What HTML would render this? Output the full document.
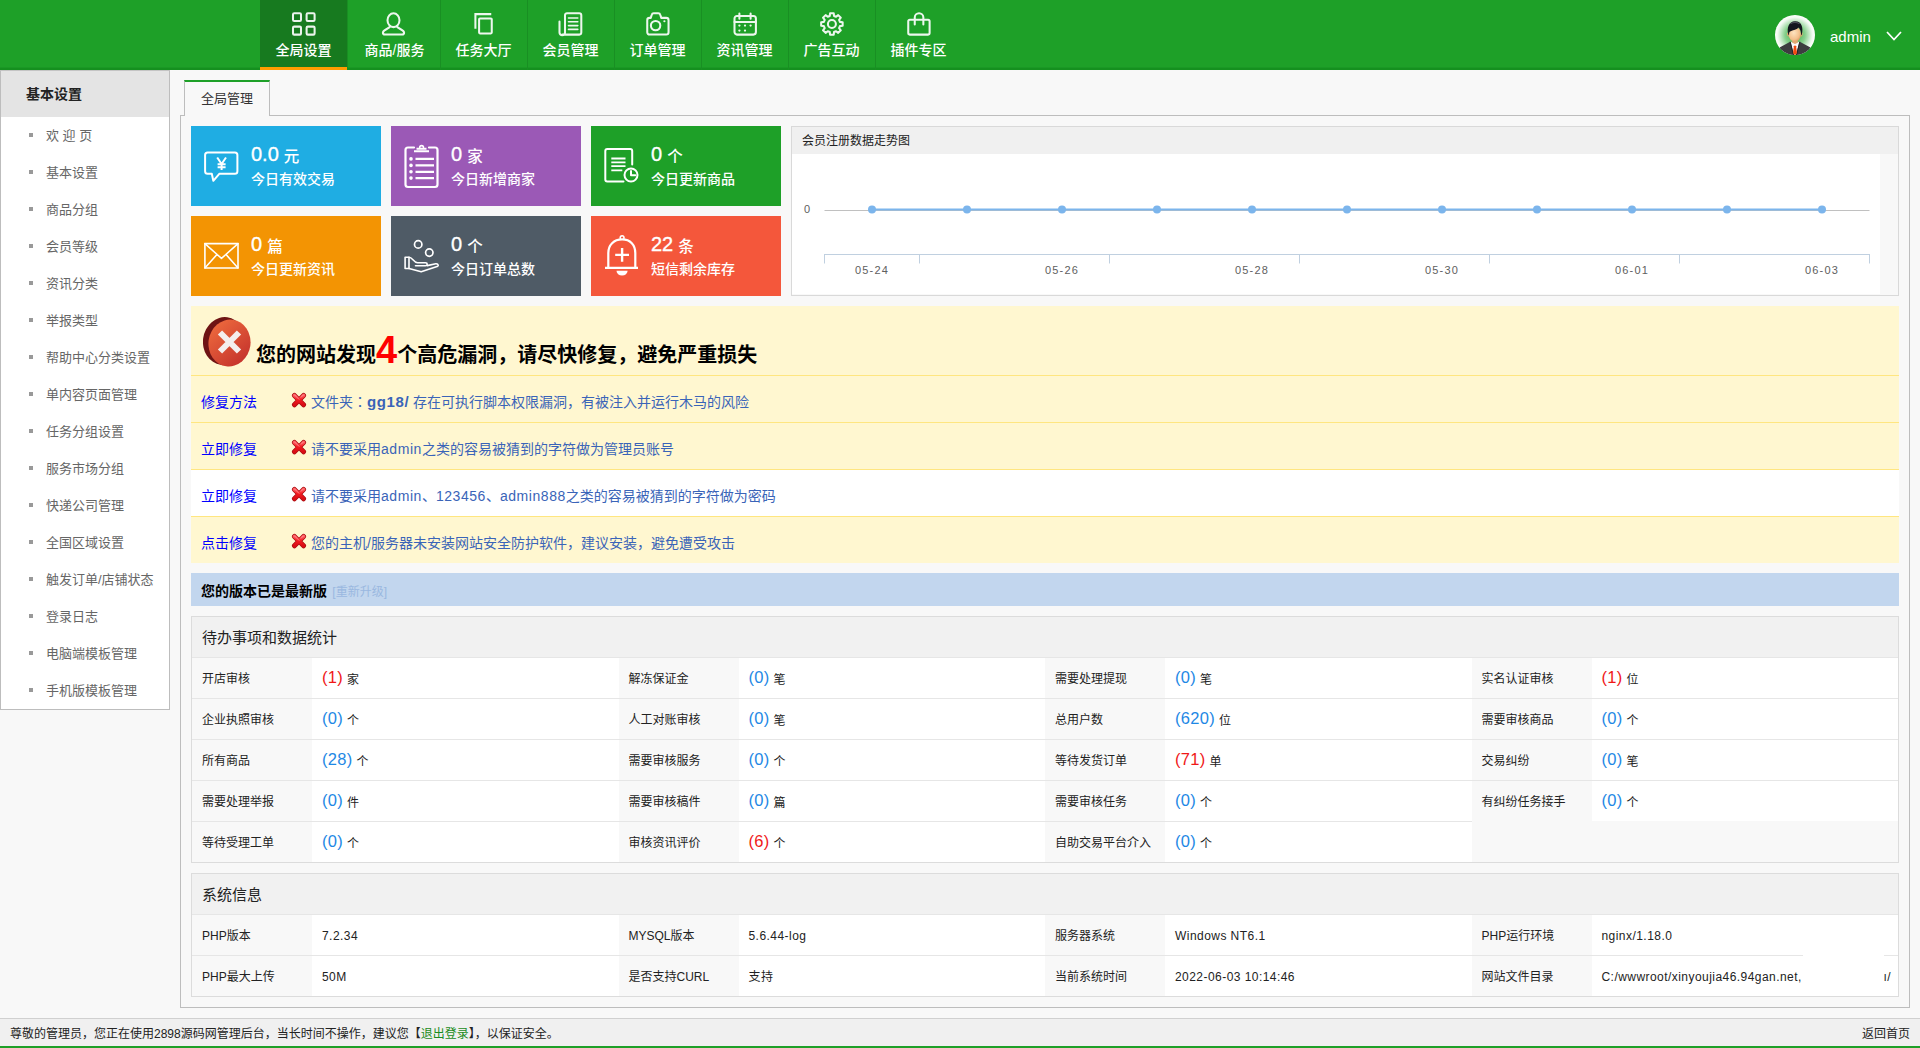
<!DOCTYPE html>
<html lang="zh-CN">
<head>
<meta charset="utf-8">
<title>管理后台</title>
<style>
*{box-sizing:border-box;margin:0;padding:0}
html,body{width:1920px;height:1048px;overflow:hidden}
body{background:#f8f8f8;font-family:"Liberation Sans","Noto Sans CJK SC",sans-serif;font-size:12px;color:#333;position:relative}
a{text-decoration:none;color:inherit}
ul{list-style:none}
.abs{position:absolute}
/* header */
#top{position:absolute;left:0;top:0;width:1920px;height:70px;background:#1ea028;border-bottom:2px solid #15901f;box-shadow:inset 0 -1px 0 #1a9825}
#nav{position:absolute;left:260px;top:0;height:70px;display:flex}
#nav li{width:87px;height:70px;border-right:1px solid #198f23;position:relative;text-align:center;color:#fff;font-size:14px}
#nav li:nth-child(n+3) svg{left:30px}
#nav li:nth-child(n+3) span{left:-1px}
#nav li:nth-child(1){width:88px}
#nav li:nth-child(2){width:93px}
#nav li:nth-child(2) svg{left:33px}
#nav li:nth-child(2) span{width:93px}
#nav li:last-child{border-right:0}
#nav li.on{background:#177a1f}
#nav li.on:after{content:"";position:absolute;left:0;bottom:0;width:87px;height:3px;background:#ff9c00}
#nav li svg{position:absolute;left:31px;top:11px;width:26px;height:26px;fill:none;stroke:#fff;stroke-width:2.05;stroke-linecap:round;stroke-linejoin:round;opacity:.92}
#nav li span{font-weight:500;position:absolute;left:0;width:87px;top:40px;line-height:20px;white-space:nowrap}
#user{position:absolute;left:1775px;top:15px;width:140px;height:40px;color:#fff}
#user .av{position:absolute;left:0;top:0;width:40px;height:40px}
#user .nm{position:absolute;left:55px;top:12px;font-size:15px;line-height:20px}
#user .ar{position:absolute;left:111px;top:16px;width:16px;height:10px}
/* sidebar */
#side{position:absolute;left:0;top:70px;width:170px;height:640px;background:#fff;border:1px solid #bdbdbd;border-top:1px solid #c4c4c4}
#side h3{height:46px;background:#e4e4e4;font-size:14px;font-weight:bold;color:#222;line-height:47px;padding-left:25px}
#side li{height:37px;line-height:37px;font-size:13px;color:#666;padding-left:45px;position:relative;white-space:nowrap}
#side li:before{content:"";position:absolute;left:28px;top:16px;width:4px;height:4px;background:#999}
/* main panel */
#tab{position:absolute;left:184px;top:80px;width:86px;height:36px;border:1px solid #bdbdbd;border-top:2px solid #1ea028;border-bottom:0;background:#f8f8f8;text-align:center;font-size:13px;line-height:34px;color:#333;z-index:2}
#panel{position:absolute;left:180px;top:115px;width:1730px;height:893px;border:1px solid #bdbdbd}
/* cards */
.card{position:absolute;width:190px;height:80px;color:#fff}
.card svg{position:absolute;left:0;top:0;width:60px;height:80px;fill:none;stroke:#fff;stroke-width:1.5;stroke-linecap:round;stroke-linejoin:round}
.card .n{-webkit-text-stroke:.35px #fff;position:absolute;left:60px;top:15px;font-size:20px;line-height:26px;white-space:nowrap}
.card .n i{-webkit-text-stroke:0;font-weight:500;position:relative;top:1px;font-style:normal;font-size:15.5px;margin-left:5px}
.card .t{font-weight:500;position:absolute;left:60px;top:43px;font-size:14px;line-height:20px;white-space:nowrap}
/* chart */
#chart{position:absolute;left:791px;top:126px;width:1108px;height:170px;border:1px solid #d9d9d9;background:#f8f8f8}
#chart h4{height:27px;background:#f0f0f0;font-weight:normal;font-size:12px;line-height:29px;padding-left:10px;color:#222}
#chart .plot{position:absolute;left:0;top:27px;width:1088px;height:140px;background:#fff}
/* warn */
#warn{position:absolute;left:191px;top:306px;width:1708px;height:257px;background:#fff7d0}
#warn .hd{height:70px;border-bottom:1px solid #ffe680;position:relative}
#warn .hd .tt{position:absolute;left:65px;top:27px;font-size:20px;font-weight:bold;color:#000;line-height:44px;white-space:nowrap}
#warn .hd .tt b{color:#f00;font-size:38px;position:relative;top:.5px;line-height:30px;font-family:"Liberation Sans",sans-serif}
#warn .row{height:47px;border-bottom:1px solid #ffe680;position:relative;font-size:14px;line-height:52px;color:#3a64b8}
#warn .row.w{background:#fff}
#warn .row:last-child{border-bottom:0;height:46px}
#warn .row a{position:absolute;left:10px;top:0;color:#0000ff}
#warn .row .x{position:absolute;left:99.500px;top:15.500px;width:16px;height:16px}
.cj{font-family:"Liberation Sans","Noto Sans CJK JP",sans-serif}
#warn .row .m b{font-size:15px;letter-spacing:.6px}
.la{letter-spacing:.55px}
#warn .row .m{position:absolute;left:120px;top:0;white-space:nowrap}
/* version */
#ver{position:absolute;left:191px;top:573px;width:1708px;height:33px;background:#c2d6ee;font-size:12px;line-height:36px;padding-left:10px;color:#000}
#ver b{font-size:14px}
#ver span{color:#9ab8e0;margin-left:2px}
/* tables */
.tb{position:absolute;left:191px;width:1708px;border:1px solid #dcdcdc;background:#f8f8f8}
.tb h4{height:41px;background:#f1f1f1;font-weight:normal;font-size:15px;line-height:42px;padding-left:10px;color:#222;border-bottom:1px solid #e6e6e6}
.tb .r{height:41px;display:flex;border-bottom:1px solid #e6e6e6}
.tb .r:last-child{border-bottom:0;height:40px}
.tb .l{width:120px;padding-left:10px;line-height:42px;height:40px;overflow:hidden;color:#222;white-space:nowrap}
.tb .v{width:306.5px;background:#fff;padding-left:10px;line-height:41px;height:40px;overflow:hidden;color:#222;white-space:nowrap;position:relative}
.tb .v b{font-weight:normal;font-size:16.5px;color:#1e88e5;margin-right:4px;position:relative;top:-1.5px;letter-spacing:.3px}
.tb .v b.rd{color:#f01818}
.tb .e{background:#f8f8f8;margin-top:-1px;height:41px;position:relative}
/* footer */
#foot{position:absolute;left:0;top:1018px;width:1920px;height:30px;background:#f0f0f0;border-top:1px solid #d0d0d0;border-bottom:2px solid #1ea028;font-size:12px;line-height:30px;color:#222;padding-left:10px}
#foot em{font-style:normal;color:#1a8c22}
#foot .bk{position:absolute;right:10px;top:0}
.tail{position:absolute;left:292px;top:0}
.sys .v{letter-spacing:.45px;line-height:43px}
</style>
</head>
<body>
<div id="top">
<ul id="nav">
<li class="on"><svg viewBox="0 0 26 26"><rect x="2" y="2.250" width="8" height="7.700" rx="1.200"/><rect x="15.600" y="2.250" width="8" height="7.700" rx="1.200"/><rect x="2" y="15.600" width="8" height="8" rx="1.200"/><rect x="15.600" y="15.600" width="8" height="8" rx="1.200"/></svg><span>全局设置</span></li>
<li><svg viewBox="0 0 26 26"><ellipse cx="12.500" cy="9.200" rx="6" ry="6.900"/><path d="M9.300 15.300C8 18 1.900 18.500 1.900 21.800c0 1.200.800 1.800 2 1.800h17.200c1.200 0 2-.600 2-1.800 0-3.300-6.100-3.800-7.400-6.500"/></svg><span>商品/服务</span></li>
<li><svg viewBox="0 0 26 26"><path d="M4.400 17.750V3.100h15.850" stroke-linecap="butt" stroke-linejoin="miter"/><rect x="8.100" y="7.500" width="12.650" height="14.900" rx=".8"/></svg><span>任务大厅</span></li>
<li><svg viewBox="0 0 26 26"><path d="M1.500 10.500V21.500a2.750 2.750 0 0 0 5.500 0V4.250a2 2 0 0 1 2-2h12.300a2 2 0 0 1 2 2V21.600a2 2 0 0 1-2 2H4.250"/><path d="M10.500 7h9.300M10.500 10.800h9.300M10.500 14.600h9.300M10.500 18.400h9.300" stroke-width="1.600"/></svg><span>会员管理</span></li>
<li><svg viewBox="0 0 26 26"><path d="M2.250 9.200a2.300 2.300 0 0 1 2.300-2.300h1.200l1-3.200a2 2 0 0 1 1.900-1.450h4.700a2 2 0 0 1 1.900 1.450l1 3.200h5a2.300 2.300 0 0 1 2.300 2.300v12.100a2.300 2.300 0 0 1-2.300 2.300H4.550a2.300 2.300 0 0 1-2.300-2.300z"/><circle cx="10.600" cy="14.600" r="4.700"/><circle cx="19.400" cy="10.250" r="1.100" fill="#fff" stroke="none"/></svg><span>订单管理</span></li>
<li><svg viewBox="0 0 26 26"><rect x="2.500" y="5" width="21.400" height="18.600" rx="2.500"/><path d="M2.500 10.900h21.400M7.400 2.500v5.250M18.600 2.500v5.250"/><g fill="#fff" stroke="none"><circle cx="7.400" cy="14.600" r="1.150"/><circle cx="13" cy="14.600" r="1.150"/><circle cx="18.600" cy="14.600" r="1.150"/><circle cx="7.400" cy="19.600" r="1.150"/><circle cx="13" cy="19.600" r="1.150"/></g></svg><span>资讯管理</span></li>
<li><svg viewBox="0 0 26 26"><path d="M10.77 4.98L11.06 2.26L14.74 2.26L15.03 4.98L17.06 5.82L19.19 4.10L21.80 6.71L20.08 8.84L20.92 10.87L23.64 11.16L23.64 14.84L20.92 15.13L20.08 17.16L21.80 19.29L19.19 21.90L17.06 20.18L15.03 21.02L14.74 23.74L11.06 23.74L10.77 21.02L8.74 20.18L6.61 21.90L4.00 19.29L5.72 17.16L4.88 15.13L2.16 14.84L2.16 11.16L4.88 10.87L5.72 8.84L4.00 6.71L6.61 4.10L8.74 5.82z"/><circle cx="12.900" cy="13" r="4"/></svg><span>广告互动</span></li>
<li><svg viewBox="0 0 26 26"><path d="M2.250 10.250a1.500 1.500 0 0 1 1.500-1.500h18.350a1.500 1.500 0 0 1 1.500 1.500V22.100a1.500 1.500 0 0 1-1.500 1.500H3.750a1.500 1.500 0 0 1-1.500-1.500z"/><path d="M8.750 13.400V6.600a4.300 4.300 0 0 1 8.600 0v6.800"/></svg><span>插件专区</span></li>
</ul>
<div id="user">
<svg class="av" viewBox="0 0 40 40"><defs><radialGradient id="ag" cx="50%" cy="50%" r="50%"><stop offset="0" stop-color="#3fae48"/><stop offset=".5" stop-color="#86d08c"/><stop offset=".88" stop-color="#f2faf2"/><stop offset="1" stop-color="#ffffff"/></radialGradient><radialGradient id="fg" cx="42%" cy="40%" r="65%"><stop offset="0" stop-color="#fde3c0"/><stop offset=".7" stop-color="#f3c08c"/><stop offset="1" stop-color="#d89a62"/></radialGradient><clipPath id="ac"><circle cx="20" cy="20" r="20"/></clipPath></defs><circle cx="20" cy="20" r="20" fill="url(#ag)"/><g clip-path="url(#ac)"><path d="M2 41L5 32.300 15.200 26.700 20 32 24.800 26.700 35 32.300 38 41z" fill="#3d3d40"/><path d="M15.400 26.800L19 40h2l3.600-13.200-4.600 1.500z" fill="#fbfbfd"/><path d="M15.200 26.700L18.500 40M24.800 26.700L21.500 40" stroke="#232325" stroke-width="1" fill="none"/><path d="M18.900 31.300L20 30.200l1.100 1.100.9 6.700-2 2.500-2-2.500z" fill="#f04a10"/><path d="M17.300 23.500h5.400v4.300L20 29l-2.700-1.200z" fill="#e3a873"/><ellipse cx="19.800" cy="19.200" rx="6.200" ry="7.400" fill="url(#fg)"/><path d="M12.600 17.800c-.3 1.600.2 3 1 3.500" stroke="#e0a56c" stroke-width="1.200" fill="none"/><path d="M27 17.800c.3 1.600-.2 3-1 3.500" stroke="#e0a56c" stroke-width="1.200" fill="none"/><path d="M13.300 19.500c-1.800-6.500.5-13 6.700-13.200 6.300-.2 8.700 6 6.800 13.200l-.8.700c.3-3-.4-5.500-2.300-7.700-2.200 2.500-6.500 2.600-9 4.200-.6.800-.7 2-.6 3.500z" fill="#14161f"/><path d="M15.500 8.800c2.500-2 6.500-2 9 0" stroke="#5a5c66" stroke-width="1.200" fill="none" opacity=".8"/></g></svg>
<span class="nm">admin</span>
<svg class="ar" viewBox="0 0 16 10"><path d="M1 1l7 7.500L15 1" fill="none" stroke="#fff" stroke-width="1.700"/></svg>
</div>
</div>

<div id="side">
<h3>基本设置</h3>
<ul>
<li>欢 迎 页</li><li>基本设置</li><li>商品分组</li><li>会员等级</li><li>资讯分类</li><li>举报类型</li><li>帮助中心分类设置</li><li>单内容页面管理</li><li>任务分组设置</li><li>服务市场分组</li><li>快递公司管理</li><li>全国区域设置</li><li>触发订单/店铺状态</li><li>登录日志</li><li>电脑端模板管理</li><li>手机版模板管理</li>
</ul>
</div>

<div id="tab">全局管理</div>
<div id="panel"></div>

<div class="card" style="left:191px;top:126px;background:#1fade3"><svg viewBox="0 0 60 80"><path d="M16.600 26.500h27.300a2.500 2.500 0 0 1 2.500 2.500v16.200a2.500 2.500 0 0 1-2.500 2.500H28.500L22.300 54.800 20.800 47.700H16.600a2.500 2.500 0 0 1-2.500-2.500V29a2.500 2.500 0 0 1 2.500-2.500z" stroke-width="2"/><path d="M26.200 31.500l4.400 6.500 4.400-6.500M30.600 38v6M26.600 38.300h8M26.600 41.300h8" stroke-width="2" stroke-linecap="butt"/></svg><div class="n">0.0<i>元</i></div><div class="t">今日有效交易</div></div>
<div class="card" style="left:391px;top:126px;background:#9b59b6"><svg viewBox="0 0 60 80"><path d="M23 21.500h-6a2.500 2.500 0 0 0-2.500 2.500v34.500a2.500 2.500 0 0 0 2.500 2.500h27a2.500 2.500 0 0 0 2.500-2.500V24a2.500 2.500 0 0 0-2.500-2.500h-6" stroke-width="2.200"/><path d="M23 25.300h15M25.500 22.800h10" stroke-width="2" stroke-linecap="butt"/><path d="M28.700 21.500a1.900 1.900 0 1 1 3.800 0" stroke-width="1.600"/><path d="M24.500 32.900h18.500M24.500 39.400h18.500M24.500 45.800h18.500M24.500 52.100h18.500" stroke-width="2.200" stroke-linecap="butt"/><g fill="#fff" stroke="none"><circle cx="20" cy="32.900" r="1.800"/><circle cx="20" cy="39.400" r="1.800"/><circle cx="20" cy="45.800" r="1.800"/><circle cx="20" cy="52.100" r="1.800"/></g></svg><div class="n">0<i>家</i></div><div class="t">今日新增商家</div></div>
<div class="card" style="left:591px;top:126px;background:#1ea028"><svg viewBox="0 0 60 80"><path d="M41.200 38.500V25a2 2 0 0 0-2-2H16.300a2 2 0 0 0-2 2v28.600a2 2 0 0 0 2 2H32.500" stroke-width="2"/><path d="M20.300 32.500h14.200M20.300 36.300h14.200M20.300 40.200h14.200M20.300 44.400h11" stroke-width="1.800" stroke-linecap="butt"/><circle cx="40" cy="49" r="6.500" stroke-width="2"/><path d="M40 45v4.200h4.300" stroke-width="2"/></svg><div class="n">0<i>个</i></div><div class="t">今日更新商品</div></div>
<div class="card" style="left:191px;top:216px;background:#f39403"><svg viewBox="0 0 60 80"><rect x="13.900" y="27.600" width="33.100" height="24.400" stroke-width="1.600"/><path d="M13.900 27.600L30.500 42.400 47 27.600M13.900 52L26 38.400M47 52L35 38.400" stroke-width="1.500"/></svg><div class="n">0<i>篇</i></div><div class="t">今日更新资讯</div></div>
<div class="card" style="left:391px;top:216px;background:#4f5b66"><svg viewBox="0 0 60 80"><circle cx="27.200" cy="28.400" r="3.700" stroke-width="1.700"/><circle cx="38.300" cy="36.600" r="3.700" stroke-width="1.700"/><path d="M14.100 41.200h3.900v11.300h-3.900z" stroke-width="1.600"/><path d="M18 41.200c3.500 0 4.500 5.500 8.500 5.500h8c2.300 0 2.300 3 0 3h-10" stroke-width="1.600"/><path d="M18 52.500l12.200 3.300 16.600-5.600c1-.8-.2-2.700-2-2.400l-8.500 1.800" stroke-width="1.600"/></svg><div class="n">0<i>个</i></div><div class="t">今日订单总数</div></div>
<div class="card" style="left:591px;top:216px;background:#f4573b"><svg viewBox="0 0 60 80"><path d="M14 51.900h33" stroke-width="2.400" stroke-linecap="butt"/><path d="M17.300 51.900V37c0-8 5.500-13.600 13.800-13.600S44.300 29 44.300 37v14.900" stroke-width="2.200"/><path d="M29.300 22.300a1.900 1.900 0 1 1 3.600 0" stroke-width="1.600"/><path d="M31.100 32v13.800M24.200 38.900h13.800" stroke-width="2.400" stroke-linecap="butt"/><path d="M25.500 54.800h11.100a5.550 4.800 0 0 1-11.100 0z" fill="#fff" stroke="none"/></svg><div class="n">22<i>条</i></div><div class="t">短信剩余库存</div></div>

<div id="chart"><h4>会员注册数据走势图</h4><svg class="plot" viewBox="0 0 1088 140" style="font-family:'Liberation Sans',sans-serif"><rect width="1088" height="140" fill="#fff"/><path d="M32.5 56.5H1077.5" stroke="#c0c0c0" stroke-width="1" fill="none"/><path d="M32.0 100.5H1078.0" stroke="#c0d0e0" stroke-width="1" fill="none"/><path d="M32.5 100.5v9M127.5 100.5v9M317.5 100.5v9M507.5 100.5v9M697.5 100.5v9M887.5 100.5v9M1077.5 100.5v9" stroke="#c0d0e0" stroke-width="1" fill="none"/><path d="M80 55.5H1030" stroke="#7cb5ec" stroke-width="2" fill="none"/><circle cx="80" cy="55.5" r="4" fill="#7cb5ec"/><circle cx="175" cy="55.5" r="4" fill="#7cb5ec"/><circle cx="270" cy="55.5" r="4" fill="#7cb5ec"/><circle cx="365" cy="55.5" r="4" fill="#7cb5ec"/><circle cx="460" cy="55.5" r="4" fill="#7cb5ec"/><circle cx="555" cy="55.5" r="4" fill="#7cb5ec"/><circle cx="650" cy="55.5" r="4" fill="#7cb5ec"/><circle cx="745" cy="55.5" r="4" fill="#7cb5ec"/><circle cx="840" cy="55.5" r="4" fill="#7cb5ec"/><circle cx="935" cy="55.5" r="4" fill="#7cb5ec"/><circle cx="1030" cy="55.5" r="4" fill="#7cb5ec"/><text x="80" y="120" text-anchor="middle" font-size="11" fill="#606060" letter-spacing="1.2">05-24</text><text x="270" y="120" text-anchor="middle" font-size="11" fill="#606060" letter-spacing="1.2">05-26</text><text x="460" y="120" text-anchor="middle" font-size="11" fill="#606060" letter-spacing="1.2">05-28</text><text x="650" y="120" text-anchor="middle" font-size="11" fill="#606060" letter-spacing="1.2">05-30</text><text x="840" y="120" text-anchor="middle" font-size="11" fill="#606060" letter-spacing="1.2">06-01</text><text x="1030" y="120" text-anchor="middle" font-size="11" fill="#606060" letter-spacing="1.2">06-03</text><text x="18" y="59" text-anchor="end" font-size="11" fill="#606060">0</text></svg></div>

<div id="warn"><div class="hd"><svg style="position:absolute;left:12px;top:11px;width:48px;height:50px" viewBox="0 0 48 50"><defs><linearGradient id="rg" x1="0" y1="0" x2="1" y2="1"><stop offset="0" stop-color="#f2703f"/><stop offset="1" stop-color="#bf2b2a"/></linearGradient></defs><ellipse cx="21" cy="24" rx="21" ry="24" fill="#6e1414" transform="rotate(8 21 24)"/><ellipse cx="26.500" cy="26" rx="21" ry="23.500" fill="url(#rg)" transform="rotate(8 26.500 26)"/><path d="M17 15.500l19 19M36 15.500l-19 19" stroke="#f4eeee" stroke-width="6" fill="none"/></svg><div class="tt">您的网站发现<b>4</b>个高危漏洞，请尽快修复，避免严重损失</div></div>
<div class="row"><a>修复方法</a><svg class="x" viewBox="0 0 15 15"><defs><linearGradient id="xg" x1="0" y1="0" x2="0" y2="1"><stop offset="0" stop-color="#ff5a5f"/><stop offset=".45" stop-color="#f41c22"/><stop offset="1" stop-color="#d90d14"/></linearGradient></defs><path d="M3.200 3.200L11.800 12M11.800 3.200L3.200 12" stroke="#a80c10" stroke-width="4.600" stroke-linecap="round" fill="none"/><path d="M3.200 3.200L11.800 12M11.800 3.200L3.200 12" stroke="url(#xg)" stroke-width="3.300" stroke-linecap="round" fill="none"/><path d="M3.300 2.700L7.500 6.900M11.700 2.700L9.500 4.900" stroke="#ffb0b0" stroke-width=".9" stroke-linecap="round" fill="none" opacity=".7"/></svg><span class="m">文件夹<span class="cj" lang="ja">：</span><b>gg18/</b> 存在可执行脚本权限漏洞，有被注入并运行木马的风险</span></div>
<div class="row"><a>立即修复</a><svg class="x" viewBox="0 0 15 15"><path d="M3.200 3.200L11.800 12M11.800 3.200L3.200 12" stroke="#a80c10" stroke-width="4.600" stroke-linecap="round" fill="none"/><path d="M3.200 3.200L11.800 12M11.800 3.200L3.200 12" stroke="url(#xg)" stroke-width="3.300" stroke-linecap="round" fill="none"/><path d="M3.300 2.700L7.500 6.900M11.700 2.700L9.500 4.900" stroke="#ffb0b0" stroke-width=".9" stroke-linecap="round" fill="none" opacity=".7"/></svg><span class="m">请不要采用<span class="la">admin</span>之类的容易被猜到的字符做为管理员账号</span></div>
<div class="row w"><a>立即修复</a><svg class="x" viewBox="0 0 15 15"><path d="M3.200 3.200L11.800 12M11.800 3.200L3.200 12" stroke="#a80c10" stroke-width="4.600" stroke-linecap="round" fill="none"/><path d="M3.200 3.200L11.800 12M11.800 3.200L3.200 12" stroke="url(#xg)" stroke-width="3.300" stroke-linecap="round" fill="none"/><path d="M3.300 2.700L7.500 6.900M11.700 2.700L9.500 4.900" stroke="#ffb0b0" stroke-width=".9" stroke-linecap="round" fill="none" opacity=".7"/></svg><span class="m">请不要采用<span class="la">admin</span>、<span class="la">123456</span>、<span class="la">admin888</span>之类的容易被猜到的字符做为密码</span></div>
<div class="row"><a>点击修复</a><svg class="x" viewBox="0 0 15 15"><path d="M3.200 3.200L11.800 12M11.800 3.200L3.200 12" stroke="#a80c10" stroke-width="4.600" stroke-linecap="round" fill="none"/><path d="M3.200 3.200L11.800 12M11.800 3.200L3.200 12" stroke="url(#xg)" stroke-width="3.300" stroke-linecap="round" fill="none"/><path d="M3.300 2.700L7.500 6.900M11.700 2.700L9.500 4.900" stroke="#ffb0b0" stroke-width=".9" stroke-linecap="round" fill="none" opacity=".7"/></svg><span class="m">您的主机/服务器未安装网站安全防护软件，建议安装，避免遭受攻击</span></div>
</div>

<div id="ver"><b>您的版本已是最新版</b> <span>[重新升级]</span></div>

<div class="tb" style="top:616px"><h4>待办事项和数据统计</h4>
<div class="r"><div class="l">开店审核</div><div class="v"><b class="rd">(1)</b>家</div><div class="l">解冻保证金</div><div class="v"><b>(0)</b>笔</div><div class="l">需要处理提现</div><div class="v"><b>(0)</b>笔</div><div class="l">实名认证审核</div><div class="v"><b class="rd">(1)</b>位</div></div>
<div class="r"><div class="l">企业执照审核</div><div class="v"><b>(0)</b>个</div><div class="l">人工对账审核</div><div class="v"><b>(0)</b>笔</div><div class="l">总用户数</div><div class="v"><b>(620)</b>位</div><div class="l">需要审核商品</div><div class="v"><b>(0)</b>个</div></div>
<div class="r"><div class="l">所有商品</div><div class="v"><b>(28)</b>个</div><div class="l">需要审核服务</div><div class="v"><b>(0)</b>个</div><div class="l">等待发货订单</div><div class="v"><b class="rd">(71)</b>单</div><div class="l">交易纠纷</div><div class="v"><b>(0)</b>笔</div></div>
<div class="r"><div class="l">需要处理举报</div><div class="v"><b>(0)</b>件</div><div class="l">需要审核稿件</div><div class="v"><b>(0)</b>篇</div><div class="l">需要审核任务</div><div class="v"><b>(0)</b>个</div><div class="l">有纠纷任务接手</div><div class="v"><b>(0)</b>个</div></div>
<div class="r"><div class="l">等待受理工单</div><div class="v"><b>(0)</b>个</div><div class="l">审核资讯评价</div><div class="v"><b class="rd">(6)</b>个</div><div class="l">自助交易平台介入</div><div class="v"><b>(0)</b>个</div><div class="l e" style="width:426.5px"></div></div>
</div>

<div class="tb sys" style="top:873px"><h4>系统信息</h4>
<div class="r"><div class="l">PHP版本</div><div class="v">7.2.34</div><div class="l">MYSQL版本</div><div class="v">5.6.44-log</div><div class="l">服务器系统</div><div class="v">Windows NT6.1</div><div class="l">PHP运行环境</div><div class="v">nginx/1.18.0</div></div>
<div class="r"><div class="l">PHP最大上传</div><div class="v">50M</div><div class="l">是否支持CURL</div><div class="v">支持</div><div class="l">当前系统时间</div><div class="v">2022-06-03 10:14:46</div><div class="l">网站文件目录</div><div class="v">C:/wwwroot/xinyoujia46.94gan.net,<span class="tail">ı/</span></div></div>
</div>


<div class="abs" style="left:1803px;top:955px;width:81px;height:41px;background:#fff"></div>
<div id="foot">尊敬的管理员，您正在使用2898源码网管理后台，当长时间不操作，建议您【<em>退出登录</em>】，以保证安全。<span class="bk">返回首页</span></div>
</body>
</html>
